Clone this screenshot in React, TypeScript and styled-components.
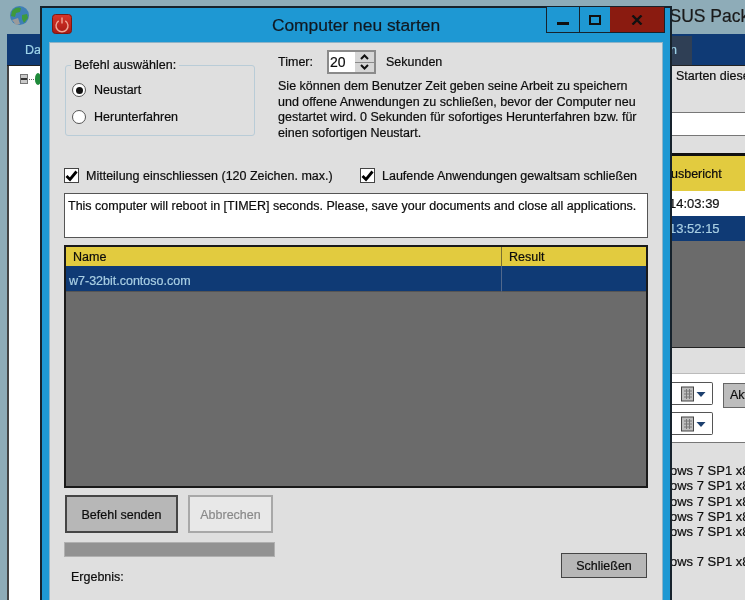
import React from "react";
import styled, { createGlobalStyle } from "styled-components";

const Global = createGlobalStyle`
  html, body { margin: 0; padding: 0; background: #8eacb8; overflow: hidden; }
  #root { width: 745px; height: 600px; }
  * { box-sizing: border-box; }
`;

const Desktop = styled.div`
  position: relative;
  width: 745px;
  height: 600px;
  overflow: hidden;
  background: #8eacb8;
  font-family: "Liberation Sans", Arial, sans-serif;
  font-size: 12.5px;
  color: #0c0c0c;
  -webkit-text-stroke: 0.2px currentColor;
  filter: blur(0.3px);
`;

/* ---- window behind ---- */
const BackWindow = styled.div`
  display: flex;
  flex-direction: column;
  height: 600px;
  margin-left: 7px;
`;
const BackTitle = styled.div`
  height: 34px;
  display: flex;
  align-items: center;
  padding-left: 646px;
`;
const BackTitleText = styled.span`
  font-size: 17.5px;
  color: #1a1a1a;
  white-space: nowrap;
  margin-top: -1px;
`;
const TabBar = styled.div`
  height: 32px;
  background: #0f3a75;
  border-bottom: 1px solid #222;
  display: flex;
  justify-content: space-between;
`;
const TabLeft = styled.span`
  color: #9fd4ea;
  padding: 9px 0 0 18px;
`;
const TabActive = styled.div`
  width: 21px;
  margin-right: 53px;
  margin-top: 2px;
  background: #2f3f55;
  color: #9fd4ea;
  overflow: hidden;
  padding: 7px 0 0 0;
  text-indent: -1px;
`;
const BackBody = styled.div`
  flex: 1;
  display: flex;
  justify-content: space-between;
`;
const TreePane = styled.div`
  width: 34px;
  background: #fff;
  border-left: 2px solid #444;
  padding: 7px 0 0 11px;
  display: flex;
  align-items: flex-start;
  gap: 1px;
`;
const Expander = styled.span`
  width: 10px;
  height: 10px;
  margin-top: 1px;
  border: 1px solid #777;
  background: #c9c9c9;
  display: flex;
  align-items: center;
  justify-content: center;
  &::after { content: ""; width: 6px; height: 2px; background: #333; }
`;
const TreeDots = styled.span`
  width: 7px;
  margin-top: 6px;
  border-top: 1px dotted #666;
`;
const TreeNode = styled.span`
  width: 10px;
  height: 12px;
  border-radius: 50%;
  background: #1f8a3a;
`;
const SidePane = styled.div`
  width: 74px;
  background: #dfdfdf;
  display: flex;
  flex-direction: column;
  overflow: hidden;
`;
const StartText = styled.div`
  height: 46px;
  padding: 3px 0 0 5px;
  white-space: nowrap;
`;
const WhiteField = styled.div`
  height: 24px;
  background: #fff;
  border-top: 1px solid #777;
  border-bottom: 1px solid #777;
`;
const SideSpacer = styled.div`
  height: 17px;
`;
const SideHeaderRow = styled.div`
  height: 38px;
  background: #e2cb3f;
  border-top: 3px solid #111;
  padding: 11px 0 0 0;
  white-space: nowrap;
`;
const SideTimeRow = styled.div<{ $selected?: boolean }>`
  height: 25px;
  padding-top: 5px;
  white-space: nowrap;
  background: ${(p) => (p.$selected ? "#0f3a75" : "#fff")};
  color: ${(p) => (p.$selected ? "#a9cfe4" : "#111")};
  font-size: 13px;
  text-indent: -2px;
`;
const SideGrey = styled.div`
  height: 107px;
  background: #6b6b6b;
  border-bottom: 1px solid #222;
`;
const SideBand = styled.div`
  height: 25px;
`;
const FilterPanel = styled.div`
  height: 70px;
  background: #fff;
  border-top: 1px solid #bbb;
  border-bottom: 1px solid #777;
  padding-top: 8px;
  display: flex;
  flex-direction: column;
  gap: 4px;
`;
const FilterRow = styled.div`
  display: flex;
  gap: 10px;
`;
const Combo = styled.div`
  flex: none;
  width: 42px;
  height: 23px;
  background: #fff;
  border: 1px solid #555;
  border-left: none;
  border-radius: 0 2px 2px 0;
  display: flex;
  align-items: center;
  justify-content: flex-end;
  padding-right: 6px;
`;
const AktButton = styled.div`
  flex: none;
  width: 40px;
  height: 25px;
  margin-top: 1px;
  background: #bdbdbd;
  border: 1px solid #666;
  padding: 4px 0 0 6px;
  white-space: nowrap;
`;
const UpdateList = styled.div`
  padding-top: 20px;
  font-size: 13px;
  line-height: 15.3px;
  white-space: nowrap;
  text-indent: -1px;
`;
const UpdateGap = styled.div`
  height: 15px;
`;

/* ---- dialog ---- */
const Dialog = styled.div`
  position: absolute;
  left: 40px;
  top: 6px;
  width: 632px;
  height: 600px;
  background: #1e98d3;
  border: 2px solid #16222c;
  border-bottom: none;
  display: flex;
  flex-direction: column;
  padding: 0 7px 5px 7px;
`;
const TitleBar = styled.div`
  position: relative;
  height: 34px;
  flex: none;
  display: flex;
  align-items: center;
  justify-content: center;
  font-size: 17.4px;
  color: #101820;
  padding: 1px 0 0 0;
`;
const AppIcon = styled.svg`
  position: absolute;
  left: 3px;
  top: 6px;
`;
const Controls = styled.div`
  position: absolute;
  right: -2px;
  top: -1px;
  height: 26px;
  display: flex;
  border: 1px solid #16222c;
  border-top: none;
`;
const CtlButton = styled.div<{ $w: number; $close?: boolean }>`
  width: ${(p) => p.$w}px;
  background: ${(p) => (p.$close ? "#8a1b10" : "#1e98d3")};
  border-left: ${(p) => (p.$close ? "none" : "1px solid #16222c")};
  display: flex;
  align-items: center;
  justify-content: center;
  &:first-child { border-left: none; }
`;
const Client = styled.div`
  flex: 1;
  background: #dfdfdf;
  border: 1px solid #8fb3c7;
  padding: 7px 14px 0 14px;
  display: flex;
  flex-direction: column;
`;
const TopRow = styled.div`
  display: flex;
  gap: 23px;
  height: 110px;
`;
const GroupBox = styled.div`
  position: relative;
  width: 191px;
  height: 71px;
  margin: 15px 0 0 1px;
  border: 1px solid #b9ccd7;
  border-radius: 3px;
  padding: 17px 0 0 6px;
  display: flex;
  flex-direction: column;
  gap: 13px;
`;
const Legend = styled.span`
  position: absolute;
  top: -8px;
  left: 5px;
  padding: 0 3px;
  background: #dfdfdf;
  line-height: 14px;
`;
const RadioRow = styled.div`
  display: flex;
  align-items: center;
  gap: 8px;
  height: 14px;
`;
const Radio = styled.span<{ $on?: boolean }>`
  width: 14px;
  height: 14px;
  border-radius: 50%;
  border: 1.5px solid #555;
  background: #fff;
  display: flex;
  align-items: center;
  justify-content: center;
  &::after {
    content: "";
    width: 7px;
    height: 7px;
    border-radius: 50%;
    background: ${(p) => (p.$on ? "#111" : "transparent")};
  }
`;
const InfoColumn = styled.div`
  width: 372px;
  display: flex;
  flex-direction: column;
`;
const TimerRow = styled.div`
  display: flex;
  align-items: center;
  height: 24px;
`;
const TimerLabel = styled.span`
  width: 49px;
`;
const Spin = styled.div`
  width: 49px;
  height: 24px;
  border: 2px solid #8a8a8a;
  background: #fff;
  display: flex;
  font-size: 14px;
`;
const SpinValue = styled.span`
  flex: 1;
  padding: 2px 0 0 1px;
`;
const SpinButtons = styled.div`
  width: 19px;
  display: flex;
  flex-direction: column;
  gap: 1px;
  background: #8a8a8a;
`;
const SpinButton = styled.div`
  flex: 1;
  background: #d6d6d6;
  display: flex;
  align-items: center;
  justify-content: center;
`;
const SecondsLabel = styled.span`
  margin-left: 10px;
`;
const Description = styled.p`
  margin: 5px 0 0;
  line-height: 15.5px;
`;
const ChecksRow = styled.div`
  display: flex;
  height: 14px;
  margin-top: 8px;
  align-items: center;
`;
const CheckItem = styled.label<{ $w: number }>`
  width: ${(p) => p.$w}px;
  display: flex;
  align-items: center;
  gap: 7px;
  white-space: nowrap;
`;
const CheckText = styled.span`
  margin-top: 1px;
`;
const CheckBox = styled.span`
  width: 15px;
  height: 15px;
  background: #fff;
  border: 1px solid #444;
  display: flex;
  align-items: center;
  justify-content: center;
`;
const MessageBox = styled.div`
  height: 45px;
  margin-top: 11px;
  background: #fff;
  border: 1px solid #555;
  padding: 5px 3px;
  white-space: nowrap;
`;
const Grid = styled.div`
  height: 243px;
  margin-top: 7px;
  background: #6b6b6b;
  border: 2px solid #1a1a1a;
  display: flex;
  flex-direction: column;
`;
const GridCells = styled.div`
  display: grid;
  grid-template-columns: 435px 1fr;
`;
const HeadCell = styled.div`
  height: 19px;
  background: #e2cb3f;
  padding: 3px 0 0 7px;
  & + & { border-left: 1px solid #7a7030; }
`;
const BodyCell = styled.div`
  height: 26px;
  background: #0f3a75;
  color: #a9cfe4;
  padding: 8px 0 0 3px;
  border-bottom: 1px solid #555;
  & + & { border-left: 1px solid #51688c; }
`;
const ActionRow = styled.div`
  display: flex;
  gap: 10px;
  margin: 7px 0 0 1px;
`;
const SendButton = styled.div`
  width: 113px;
  height: 38px;
  background: #b7b7b7;
  border: 2px solid #454545;
  padding-top: 2px;
  display: flex;
  align-items: center;
  justify-content: center;
`;
const CancelButton = styled.div`
  width: 85px;
  height: 38px;
  background: #e8e8e8;
  border: 2px solid #a8a8a8;
  color: #8a8a8a;
  padding-top: 2px;
  display: flex;
  align-items: center;
  justify-content: center;
`;
const ProgressRow = styled.div`
  display: flex;
  justify-content: space-between;
  margin-top: 9px;
`;
const Progress = styled.div`
  width: 211px;
  height: 15px;
  background: #929292;
  border: 1px solid #b0b0b0;
`;
const CloseButton = styled.div`
  width: 86px;
  height: 25px;
  margin-top: 11px;
  margin-right: 1px;
  background: #b7b7b7;
  border: 1px solid #454545;
  padding-top: 1px;
  display: flex;
  align-items: center;
  justify-content: center;
`;
const Result = styled.div`
  margin: -8px 0 0 7px;
`;

const Globe = styled.svg`
  position: absolute;
  left: 9px;
  top: 5px;
`;

const CalendarIcon = () => (
  <svg width="25" height="16" viewBox="0 0 25 16">
    <rect x="0.5" y="1" width="12" height="14" fill="#bdbdbd" stroke="#444" />
    <path d="M3 5h8M3 8h8M3 11h8M5.5 3v10M8.5 3v10" stroke="#777" strokeWidth="1" />
    <path d="M15.5 6h9l-4.5 5z" fill="#1c3f6e" />
  </svg>
);

const Check = () => (
  <svg width="13" height="13" viewBox="0 0 13 13">
    <path d="M1.5 7l3.5 3.5L11.5 2.5" fill="none" stroke="#000" strokeWidth="2.8" />
  </svg>
);

const updates = ["ows 7 SP1 x8", "ows 7 SP1 x8", "ows 7 SP1 x8", "ows 7 SP1 x8", "ows 7 SP1 x8"];

export default function App() {
  return (
    <Desktop>
      <Global />
      <BackWindow>
        <BackTitle>
          <BackTitleText>WSUS Pack</BackTitleText>
        </BackTitle>
        <TabBar>
          <TabLeft>Da</TabLeft>
          <TabActive>n</TabActive>
        </TabBar>
        <BackBody>
          <TreePane>
            <Expander />
            <TreeDots />
            <TreeNode />
          </TreePane>
          <SidePane>
            <StartText>Starten diese</StartText>
            <WhiteField />
            <SideSpacer />
            <SideHeaderRow>usbericht</SideHeaderRow>
            <SideTimeRow>14:03:39</SideTimeRow>
            <SideTimeRow $selected>13:52:15</SideTimeRow>
            <SideGrey />
            <SideBand />
            <FilterPanel>
              <FilterRow>
                <Combo><CalendarIcon /></Combo>
                <AktButton>Akt</AktButton>
              </FilterRow>
              <FilterRow>
                <Combo><CalendarIcon /></Combo>
              </FilterRow>
            </FilterPanel>
            <UpdateList>
              {updates.map((u, i) => (
                <div key={i}>{u}</div>
              ))}
              <UpdateGap />
              <div>ows 7 SP1 x8</div>
            </UpdateList>
          </SidePane>
        </BackBody>
      </BackWindow>

      <Globe width="21" height="21" viewBox="0 0 21 21">
        <circle cx="10.5" cy="10.5" r="9.5" fill="#3f7fb5" />
        <path d="M3 6c3-4 7-4 9-3l-1 4-4 1-1 4-4-1z" fill="#3f9a3c" />
        <path d="M13 10l5-1 1 4-4 5-2-4z" fill="#3f9a3c" />
        <path d="M3 15l6-2 2 6-4 1z" fill="#9a9a9a" />
      </Globe>

      <Dialog>
        <TitleBar>
          <AppIcon width="20" height="20" viewBox="0 0 20 20">
            <defs>
              <linearGradient id="pw" x1="0" y1="0" x2="0" y2="1">
                <stop offset="0" stopColor="#d8362a" />
                <stop offset="1" stopColor="#a81a14" />
              </linearGradient>
            </defs>
            <rect x="0.5" y="0.5" width="19" height="19" rx="3" fill="url(#pw)" stroke="#7c1712" />
            <path d="M6.7 5.8a6 6 0 1 0 6.6 0" transform="translate(0 1)" fill="none" stroke="#f0a898" strokeWidth="1.4" />
            <path d="M10 3.5v6" stroke="#f0a898" strokeWidth="1.4" />
          </AppIcon>
          Computer neu starten
          <Controls>
            <CtlButton $w={32}>
              <svg width="12" height="12" viewBox="0 0 12 12"><rect x="0" y="8" width="12" height="3" fill="#111" /></svg>
            </CtlButton>
            <CtlButton $w={31}>
              <svg width="12" height="10" viewBox="0 0 12 10"><rect x="1" y="1" width="10" height="8" fill="none" stroke="#111" strokeWidth="2" /></svg>
            </CtlButton>
            <CtlButton $w={54} $close>
              <svg width="12" height="10" viewBox="0 0 12 10"><path d="M1.5 0.5l9 9M10.5 0.5l-9 9" stroke="#111" strokeWidth="2.4" /></svg>
            </CtlButton>
          </Controls>
        </TitleBar>
        <Client>
          <TopRow>
            <GroupBox>
              <Legend>Befehl auswählen:</Legend>
              <RadioRow><Radio $on />Neustart</RadioRow>
              <RadioRow><Radio />Herunterfahren</RadioRow>
            </GroupBox>
            <InfoColumn>
              <TimerRow>
                <TimerLabel>Timer:</TimerLabel>
                <Spin>
                  <SpinValue>20</SpinValue>
                  <SpinButtons>
                    <SpinButton>
                      <svg width="9" height="6" viewBox="0 0 9 6"><path d="M1 5l3.5-3.5L8 5" fill="none" stroke="#111" strokeWidth="2" /></svg>
                    </SpinButton>
                    <SpinButton>
                      <svg width="9" height="6" viewBox="0 0 9 6"><path d="M1 1l3.5 3.5L8 1" fill="none" stroke="#111" strokeWidth="2" /></svg>
                    </SpinButton>
                  </SpinButtons>
                </Spin>
                <SecondsLabel>Sekunden</SecondsLabel>
              </TimerRow>
              <Description>
                Sie können dem Benutzer Zeit geben seine Arbeit zu speichern<br />
                und offene Anwendungen zu schließen, bevor der Computer neu<br />
                gestartet wird. 0 Sekunden für sofortiges Herunterfahren bzw. für<br />
                einen sofortigen Neustart.
              </Description>
            </InfoColumn>
          </TopRow>
          <ChecksRow>
            <CheckItem $w={296}><CheckBox><Check /></CheckBox><CheckText>Mitteilung einschliessen (120 Zeichen. max.)</CheckText></CheckItem>
            <CheckItem $w={288}><CheckBox><Check /></CheckBox><CheckText>Laufende Anwendungen gewaltsam schließen</CheckText></CheckItem>
          </ChecksRow>
          <MessageBox>This computer will reboot in [TIMER] seconds. Please, save your documents and close all applications.</MessageBox>
          <Grid>
            <GridCells>
              <HeadCell>Name</HeadCell>
              <HeadCell>Result</HeadCell>
              <BodyCell>w7-32bit.contoso.com</BodyCell>
              <BodyCell />
            </GridCells>
          </Grid>
          <ActionRow>
            <SendButton>Befehl senden</SendButton>
            <CancelButton>Abbrechen</CancelButton>
          </ActionRow>
          <ProgressRow>
            <Progress />
            <CloseButton>Schließen</CloseButton>
          </ProgressRow>
          <Result>Ergebnis:</Result>
        </Client>
      </Dialog>
    </Desktop>
  );
}
